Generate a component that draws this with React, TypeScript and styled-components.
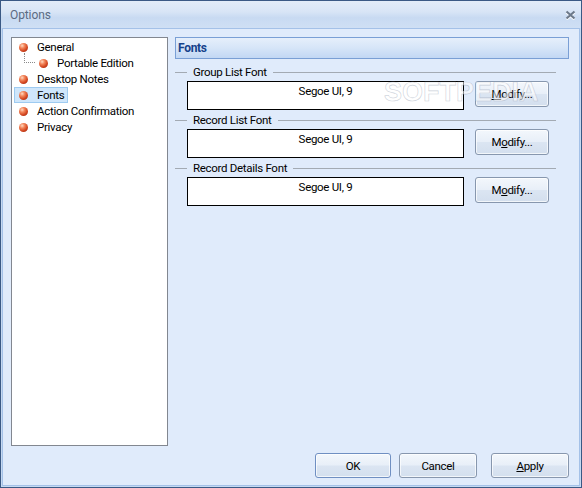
import React from 'react';
import styled, { createGlobalStyle } from 'styled-components';

const FONT = `Roboto, "Noto Sans", sans-serif`;

const Global = createGlobalStyle`
  html, body { margin: 0; padding: 0; }
  body {
    width: 582px;
    height: 488px;
    overflow: hidden;
    font-family: ${FONT};
    font-size: 11.5px;
    letter-spacing: -0.3px;
    color: #000;
    background: #fff;
  }
`;

const Window = styled.div`
  position: relative;
  width: 582px;
  height: 488px;
  box-sizing: border-box;
  border: 1px solid #3a5985;
  background: #c6d9f1;
  display: flex;
  flex-direction: column;
`;

const TitleBar = styled.div`
  height: 27px;
  flex: none;
  display: flex;
  align-items: center;
  justify-content: space-between;
  padding: 0 4px 0 9px;
  background: linear-gradient(#e2ecf8 0%, #d8e5f6 40%, #c8daf2 62%, #cfdff4 100%);
`;

const Title = styled.span`
  font-size: 12px;
  letter-spacing: -0.1px;
  color: #5b6b82;
`;

const CloseGlyph = styled.svg`
  width: 11px;
  height: 10px;
  margin-right: 1px;
  margin-top: 1px;
`;

const Client = styled.div`
  flex: 1;
  margin: 0 1px 1px 1px;
  border: 1px solid #a4c1e8;
  background: #e0ebfb;
  display: flex;
  flex-direction: column;
  padding: 8px 10px 7px 8px;
`;

const Main = styled.div`
  display: flex;
  gap: 7px;
  height: 409px;
  flex: none;
`;

const Tree = styled.div`
  width: 157px;
  box-sizing: border-box;
  height: 100%;
  background: #fff;
  border: 1px solid #828790;
  padding-top: 1px;
  display: flex;
  flex-direction: column;
`;

const Row = styled.div<{ $level: number }>`
  position: relative;
  height: 16px;
  display: flex;
  align-items: center;
  padding-left: ${p => 2 + p.$level * 20}px;
`;

const Connector = styled.span`
  position: absolute;
  left: 12px;
  top: -2px;
  width: 10px;
  height: 9px;
  border-left: 1px dotted #8a8a8a;
  border-bottom: 1px dotted #8a8a8a;
`;

const Item = styled.div<{ $selected?: boolean }>`
  display: flex;
  align-items: center;
  height: 16px;
  box-sizing: border-box;
  padding: 0 3px 0 4px;
  border: 1px solid ${p => (p.$selected ? '#9ecbf1' : 'transparent')};
  background: ${p => (p.$selected ? '#cfe6fb' : 'transparent')};
`;

const Bullet = styled.span`
  width: 9px;
  height: 9px;
  border-radius: 50%;
  flex: none;
  margin-right: 9px;
  background: radial-gradient(circle at 35% 30%, #ffd9c2 0%, #f3875c 28%, #d2441e 62%, #8c2410 100%);
`;

const ItemText = styled.span`
  white-space: nowrap;
  line-height: 14px;
`;

const Panel = styled.div`
  flex: 1;
  display: flex;
  flex-direction: column;
`;

const PanelHeader = styled.div`
  height: 22px;
  box-sizing: border-box;
  border: 1px solid #7a9fd5;
  background: linear-gradient(#e6effb 0%, #d6e5f8 50%, #c2d7f4 100%);
  display: flex;
  align-items: center;
  padding-left: 2px;
  font-weight: bold;
  font-size: 12px;
  color: #15428b;
  margin-bottom: 5px;
`;

const Group = styled.div`
  display: flex;
  flex-direction: column;
  margin-bottom: 2px;
  margin-right: 13px;
`;

const GroupHeader = styled.div`
  height: 16px;
  display: flex;
  align-items: center;
  margin-bottom: 1px;
  &::before {
    content: '';
    width: 12px;
    height: 1px;
    background: #a3aab3;
  }
  &::after {
    content: '';
    flex: 1;
    height: 1px;
    background: #a3aab3;
  }
`;

const GroupLabel = styled.span`
  padding: 0 6px;
  white-space: nowrap;
`;

const FieldRow = styled.div`
  display: flex;
  align-items: flex-start;
  gap: 11px;
  padding-left: 12px;
`;

const FontBox = styled.div`
  width: 277px;
  height: 29px;
  box-sizing: border-box;
  border: 1px solid #000;
  background: #fff;
  text-align: center;
  padding-top: 1px;
  line-height: 16px;
`;

const Button = styled.button<{ $w: number; $default?: boolean }>`
  width: ${p => p.$w}px;
  height: ${p => (p.$default !== undefined ? 25 : 26)}px;
  box-sizing: border-box;
  font-family: ${FONT};
  font-size: 11.5px;
  letter-spacing: -0.3px;
  color: #000;
  padding: 0;
  border: 1px solid ${p => (p.$default ? '#6f8fc2' : '#8797ae')};
  border-radius: 3px;
  background: linear-gradient(#f3f7fc 0%, #e8eff8 48%, #dbe5f2 52%, #d3dfee 100%);
  box-shadow: inset 0 0 0 1px rgba(255, 255, 255, 0.7);
  display: flex;
  align-items: center;
  justify-content: center;
`;

const ButtonBar = styled.div`
  margin-top: 7px;
  height: 25px;
  display: flex;
  justify-content: flex-end;
`;

const Spacer = styled.span<{ $w: number }>`
  width: ${p => p.$w}px;
  flex: none;
`;

const Watermark = styled.div`
  position: absolute;
  left: 383px;
  top: 76px;
  font-family: "Liberation Sans", Arial, sans-serif;
  font-weight: bold;
  font-size: 27px;
  letter-spacing: 0;
  color: rgba(255, 255, 255, 0.55);
  -webkit-text-stroke: 0.6px rgba(150, 160, 178, 0.5);
  pointer-events: none;
`;

const treeItems = [
  { label: 'General', level: 0 },
  { label: 'Portable Edition', level: 1 },
  { label: 'Desktop Notes', level: 0 },
  { label: 'Fonts', level: 0, selected: true },
  { label: 'Action Confirmation', level: 0 },
  { label: 'Privacy', level: 0 },
];

const groups = [
  { label: 'Group List Font', accel: 0 },
  { label: 'Record List Font', accel: 1 },
  { label: 'Record Details Font', accel: 1 },
];

function Accel({ text, index }: { text: string; index: number }) {
  return (
    <span>
      {text.slice(0, index)}
      <u>{text[index]}</u>
      {text.slice(index + 1)}
    </span>
  );
}

export default function App() {
  return (
    <>
      <Global />
      <Window>
        <TitleBar>
          <Title>Options</Title>
          <CloseGlyph viewBox="0 0 11 10">
            <path d="M1.5 1.5 L9.5 8.5 M9.5 1.5 L1.5 8.5" stroke="#ffffff" strokeWidth="2.6" transform="translate(0 0.8)" />
            <path d="M1.5 1.5 L9.5 8.5 M9.5 1.5 L1.5 8.5" stroke="#6d7a8b" strokeWidth="2.2" />
          </CloseGlyph>
        </TitleBar>
        <Client>
          <Main>
            <Tree>
              {treeItems.map(it => (
                <Row key={it.label} $level={it.level}>
                  {it.level > 0 && <Connector />}
                  <Item $selected={it.selected}>
                    <Bullet />
                    <ItemText>{it.label}</ItemText>
                  </Item>
                </Row>
              ))}
            </Tree>
            <Panel>
              <PanelHeader>Fonts</PanelHeader>
              {groups.map(g => (
                <Group key={g.label}>
                  <GroupHeader>
                    <GroupLabel>{g.label}</GroupLabel>
                  </GroupHeader>
                  <FieldRow>
                    <FontBox>Segoe UI, 9</FontBox>
                    <Button $w={74}>
                      <Accel text="Modify..." index={g.accel} />
                    </Button>
                  </FieldRow>
                </Group>
              ))}
            </Panel>
          </Main>
          <ButtonBar>
            <Button $w={76} $default={true}>OK</Button>
            <Spacer $w={8} />
            <Button $w={78} $default={false}>Cancel</Button>
            <Spacer $w={14} />
            <Button $w={78} $default={false}>
              <Accel text="Apply" index={0} />
            </Button>
          </ButtonBar>
        </Client>
        <Watermark>SOFTPEDIA</Watermark>
      </Window>
    </>
  );
}
